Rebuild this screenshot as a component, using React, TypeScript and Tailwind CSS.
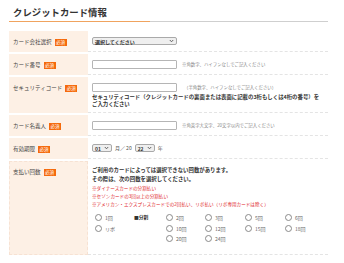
import React from "react";

const Badge = () => (
  <span className="ml-[3px] inline-flex h-[7px] items-center bg-[#f56a0c] px-[1.5px] text-[4.5px] leading-none text-white">必須</span>
);

const Label = ({ children }: { children: React.ReactNode }) => (
  <div className="flex items-center bg-[#fdf0e5] pl-[4px] pt-[8px] items-start text-[5.5px] leading-[7px] text-[#444]">
    <span>{children}</span>
    <Badge />
  </div>
);

const Chevron = () => (
  <svg width="5" height="4" viewBox="0 0 5 4" className="shrink-0">
    <path d="M0.8 1 L2.5 2.8 L4.2 1" fill="none" stroke="#555" strokeWidth="0.9" />
  </svg>
);

const FakeSelect = ({ text, w }: { text: string; w: string }) => (
  <div className={`${w} flex h-[8px] items-center justify-between rounded-[2px] border border-[#a9a9a9] bg-[#efefef] px-[2px] text-[5px] font-bold leading-none text-[#333]`}>
    <span>{text}</span>
    <Chevron />
  </div>
);

const Input = () => <div className="h-[9px] w-[85px] shrink-0 rounded-[1px] border border-[#b5b5b5] bg-white" />;

const Radio = ({ label }: { label: string }) => (
  <div className="flex items-center gap-[3px]">
    <span className="h-[7px] w-[7px] shrink-0 rounded-full border border-[#8a8a8a] bg-white" />
    <span className="text-[5px] leading-none text-[#666]">{label}</span>
  </div>
);

export default function App() {
  return (
    <div className="h-[263px] w-[344px] overflow-hidden bg-white font-['Noto_Sans_CJK_JP',sans-serif]">
      <div className="pl-[9px] pr-[16px] pt-[6px]">
        <h2 className="pl-[4px] text-[9.4px] font-bold leading-[13px] text-[#333]">クレジットカード情報</h2>
        <div className="mt-[2px] flex h-[1px]">
          <div className="w-[141px] bg-[#f0a35e]" />
          <div className="flex-1 bg-[#cfcfcf]" />
        </div>
        <div className="mt-[9px] flex flex-col gap-[2px]">
          {/* row 1 */}
          <div className="grid h-[21px] grid-cols-[79px_1fr]">
            <Label>カード会社選択</Label>
            <div className="border-b border-dashed border-[#e4e4e4] pl-[4px] pt-[6px]">
              <FakeSelect text="選択してください" w="w-[85px]" />
            </div>
          </div>
          {/* row 2 */}
          <div className="grid h-[21px] grid-cols-[79px_1fr]">
            <Label>カード番号</Label>
            <div className="flex items-start border-b border-dashed border-[#e4e4e4] pl-[4px] pt-[6px]">
              <Input />
              <span className="ml-[5px] mt-[2px] text-[4.4px] leading-none text-[#888]">※角数字、ハイフンなしでご記入ください</span>
            </div>
          </div>
          {/* row 3 */}
          <div className="grid h-[36px] grid-cols-[79px_1fr]">
            <Label>セキュリティコード</Label>
            <div className="border-b border-dashed border-[#e4e4e4] pl-[4px] pt-[6px]">
              <div className="flex items-start">
                <Input />
                <span className="ml-[7px] mt-[2px] text-[4.4px] leading-none text-[#888]">（半角数字、ハイフンなしでご記入ください）</span>
              </div>
              <p className="mt-[2px] text-[5.4px] font-bold leading-[7px] text-[#333]">
                セキュリティコード（クレジットカードの裏面または表面に記載の3桁もしくは4桁の番号）を
                <br />
                ご入力ください
              </p>
            </div>
          </div>
          {/* row 4 */}
          <div className="grid h-[21px] grid-cols-[79px_1fr]">
            <Label>カード名義人</Label>
            <div className="flex items-start border-b border-dashed border-[#e4e4e4] pl-[4px] pt-[6px]">
              <Input />
              <span className="ml-[5px] mt-[2px] text-[4.4px] leading-none text-[#888]">※角英字大文字、20文字以内でご記入ください</span>
            </div>
          </div>
          {/* row 5 */}
          <div className="grid h-[21px] grid-cols-[79px_1fr]">
            <Label>有効期限</Label>
            <div className="flex items-start border-b border-dashed border-[#e4e4e4] pl-[4px] pt-[6px]">
              <FakeSelect text="01" w="w-[20px]" />
              <span className="ml-[3px] mt-[1px] text-[5px] leading-none text-[#555]">月／ 20</span>
              <div className="ml-[3px]">
                <FakeSelect text="22" w="w-[20px]" />
              </div>
              <span className="ml-[3px] mt-[1px] text-[5px] leading-none text-[#555]">年</span>
            </div>
          </div>
          {/* row 6 */}
          <div className="grid h-[94px] grid-cols-[79px_1fr]">
            <div className="flex items-start border border-dashed border-[#f7e2d3] bg-[#fdf0e5] pl-[3px] pt-[7px] text-[5.5px] leading-[7px] text-[#444]">
              <span>支払い回数</span>
              <Badge />
            </div>
            <div className="border-b border-dashed border-[#e4e4e4] pl-[4px] pt-[5px]">
              <p className="text-[5.4px] font-bold leading-[9px] text-[#333]">
                ご利用のカードによっては選択できない回数があります。
                <br />
                その際は、次の回数を選択してください。
              </p>
              <div className="text-[4.6px] leading-[8px] text-[#e0262a]">
                <div>※ダイナースカードの分割払い</div>
                <div>※セゾンカードの3回以上の分割払い</div>
                <div>※アメリカン・エクスプレスカードでの2回払い、リボ払い（リボ専用カードは除く）</div>
              </div>
              <div className="mt-[6px] grid grid-cols-[39px_32px_39px_40px_40px_40px] gap-y-[3.5px] pl-[3px]">
                <Radio label="1回" />
                <div className="flex items-center text-[4.8px] font-bold leading-none text-[#333]">■分割</div>
                <Radio label="2回" />
                <Radio label="3回" />
                <Radio label="5回" />
                <Radio label="6回" />
                <Radio label="リボ" />
                <div />
                <Radio label="10回" />
                <Radio label="12回" />
                <Radio label="15回" />
                <Radio label="18回" />
                <div />
                <div />
                <Radio label="20回" />
                <Radio label="24回" />
              </div>
            </div>
          </div>
        </div>
      </div>
    </div>
  );
}
